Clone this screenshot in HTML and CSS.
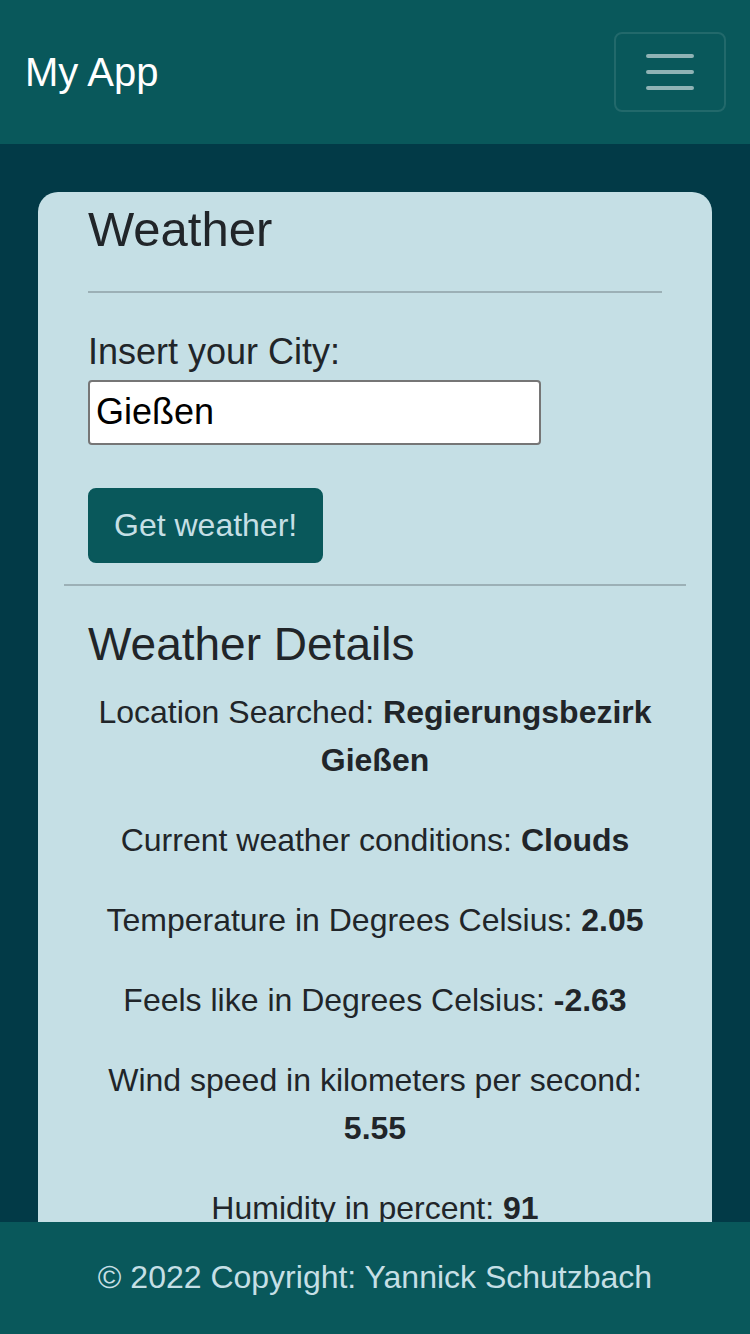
FILE: index.html
```html
<!DOCTYPE html>
<html lang="en">
<head>
<meta charset="utf-8">
<title>My App</title>
<link rel="stylesheet" href="styles.css">
</head>
<body>
<nav class="navbar">
  <a class="brand" href="#">My App</a>
  <button class="toggler" type="button" aria-label="Toggle navigation">
    <svg class="toggler-icon" viewBox="0 0 30 30" width="60" height="60">
      <path d="M4 7h22M4 15h22M4 23h22" stroke="rgba(255,255,255,0.55)" stroke-width="2" stroke-linecap="round" stroke-miterlimit="10" fill="none"/>
    </svg>
  </button>
</nav>
<main class="main">
  <section class="card">
    <h2 class="title">Weather</h2>
    <hr class="rule">
    <form class="form">
      <label class="label" for="city">Insert your City:</label>
      <input class="input" id="city" type="text" value="Gießen">
      <button class="btn" type="button">Get weather!</button>
    </form>
    <hr class="rule rule-wide">
    <h3 class="subtitle">Weather Details</h3>
    <div class="details">
      <p>Location Searched: <b>Regierungsbezirk Gießen</b></p>
      <p>Current weather conditions: <b>Clouds</b></p>
      <p>Temperature in Degrees Celsius: <b>2.05</b></p>
      <p>Feels like in Degrees Celsius: <b>-2.63</b></p>
      <p>Wind speed in kilometers per second: <b>5.55</b></p>
      <p>Humidity in percent: <b>91</b></p>
    </div>
  </section>
</main>
<footer class="footer">© 2022 Copyright: Yannick Schutzbach</footer>
</body>
</html>
```

FILE: styles.css
```css
* { box-sizing: border-box; }

html, body {
  margin: 0;
  padding: 0;
}

body {
  background: #023a47;
  font-family: "Liberation Sans", Arial, sans-serif;
  color: #212529;
  font-size: 32px;
  line-height: 1.5;
}

.navbar {
  background: #09585b;
  height: 144px;
  padding: 32px 24px 32px 25px;
  display: flex;
  align-items: center;
  justify-content: space-between;
}

.brand {
  color: #ffffff;
  font-size: 40px;
  line-height: 60px;
  text-decoration: none;
}

.toggler {
  width: 112px;
  height: 80px;
  padding: 8px 24px;
  background: transparent;
  border: 2px solid rgba(255, 255, 255, 0.1);
  border-radius: 8px;
  display: flex;
  align-items: center;
  justify-content: center;
}

.toggler-icon {
  display: block;
  width: 60px;
  height: 60px;
}

.main {
  padding: 48px 38px 140px;
}

.card {
  background: #c5dfe5;
  border-radius: 20px;
  padding: 8px 50px 40px;
}

.title {
  margin: 0 0 32px;
  font-size: 49px;
  font-weight: 400;
  line-height: 1.2;
}

.rule {
  margin: 0;
  border: 0;
  border-top: 2px solid #9cb0b6;
  height: 0;
}

.form {
  display: flex;
  flex-direction: column;
  align-items: flex-start;
  padding-top: 32px;
}

.label {
  font-size: 36px;
  line-height: 54px;
  margin-bottom: 1px;
}

.input {
  width: 453px;
  height: 65px;
  font-family: "Liberation Sans", Arial, sans-serif;
  font-size: 36px;
  color: #000000;
  background: #ffffff;
  border: 2px solid #767676;
  border-radius: 4px;
  padding: 0 6px;
  margin: 0;
}

.btn {
  margin-top: 43px;
  margin-bottom: 21px;
  height: 75px;
  padding: 0 24px;
  background: #09585b;
  color: #c5dfe5;
  border: 2px solid #09585b;
  border-radius: 8px;
  font-family: "Liberation Sans", Arial, sans-serif;
  font-size: 32px;
  line-height: 48px;
}

.rule-wide {
  margin: 0 -24px;
}

.subtitle {
  margin: 31px 0 16px;
  font-size: 46px;
  font-weight: 400;
  line-height: 1.2;
}

.details {
  text-align: center;
}

.details p {
  margin: 0 0 32px;
}

.details b {
  font-weight: 700;
}

.footer {
  position: fixed;
  left: 0;
  right: 0;
  bottom: 0;
  height: 112px;
  background: #09585b;
  color: #c5dfe5;
  text-align: center;
  font-size: 32px;
  line-height: 48px;
  padding: 31px 12px 33px;
}
```
